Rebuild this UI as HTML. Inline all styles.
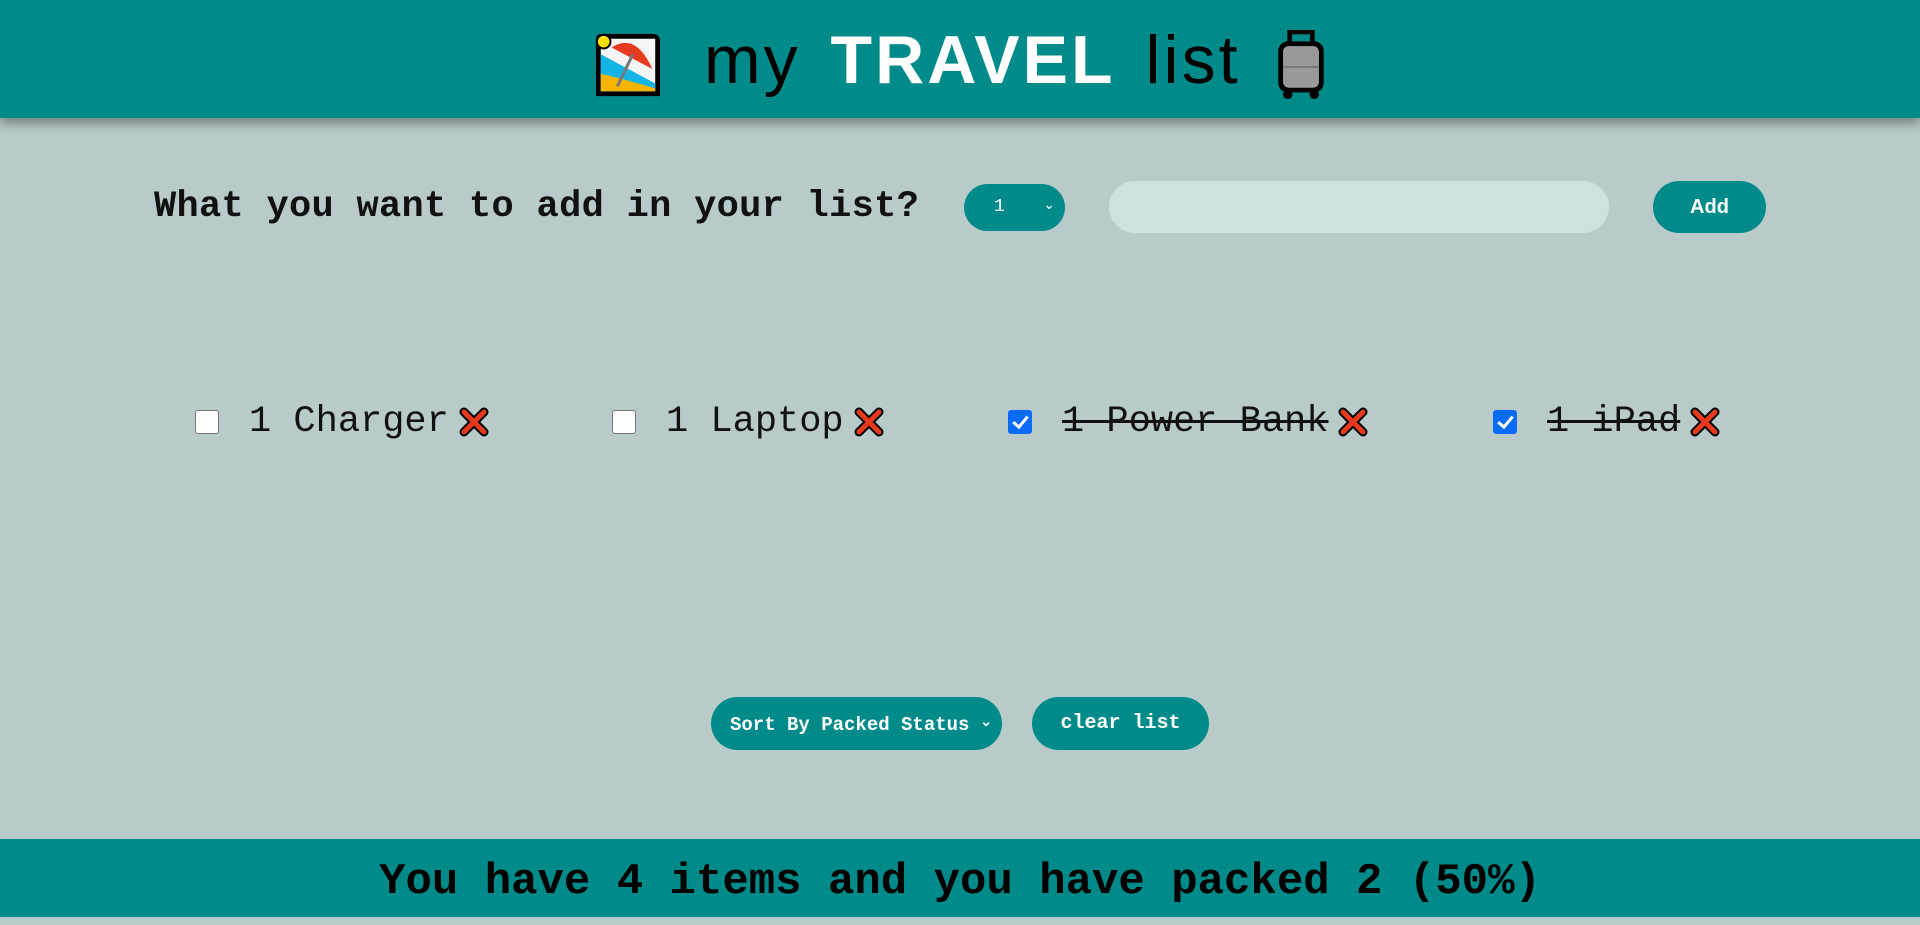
<!DOCTYPE html>
<html><head><meta charset="utf-8"><style>
*{margin:0;padding:0;box-sizing:border-box}
body{width:1920px;height:917px;background:#b8cbca;font-family:"Liberation Mono",monospace;position:relative;overflow:hidden}
.hdr{position:absolute;left:0;top:0;width:1920px;height:118px;background:#008b8a;box-shadow:0 6px 10px rgba(0,0,0,.35)}
.title{position:absolute;left:704px;top:26px;font-family:"Liberation Sans",sans-serif;font-size:68px;line-height:1;color:#000;white-space:nowrap;letter-spacing:3px;word-spacing:8px}
.title span{color:#fff;font-weight:bold}
.sel{position:absolute;left:964px;top:184px;width:101px;height:47px;border-radius:24px;background:#008b8a;color:#fff;font-size:18px;padding:13px 0 0 30px}
.sel i,.sort i{position:absolute;right:10px;top:13px;font-style:normal;font-size:14px}
.q{position:absolute;left:154px;top:186px;font-size:37px;font-weight:bold;color:#111;letter-spacing:0.3px}
.inp{position:absolute;left:1109px;top:181px;width:500px;height:52px;border-radius:26px;background:#cfe0e0}
.add{position:absolute;left:1653px;top:181px;width:113px;height:52px;border-radius:26px;background:#008b8a;color:#fff;font-weight:bold;font-size:20px;text-align:center;line-height:52px;font-family:"Liberation Sans",sans-serif}
.item{position:absolute;top:400px;height:44px;display:flex;align-items:center;font-size:37px;color:#111;white-space:nowrap}
.cb{width:24px;height:24px;border:1px solid #777;border-radius:3px;background:#fff;margin-right:30px}
.cb.on{background:#0a6cf5;border-color:#0a6cf5;position:relative}
.cb.on:after{content:"";position:absolute;left:7px;top:2px;width:6px;height:12px;border:solid #fff;border-width:0 3px 3px 0;transform:rotate(40deg)}
.x{margin-left:10px;width:30px;height:30px}
.s{text-decoration:line-through;text-decoration-thickness:3px}
.sort{position:absolute;left:711px;top:697px;width:291px;height:53px;border-radius:27px;background:#008b8a;color:#fff;font-weight:bold;font-size:19px;padding:17px 0 0 19px}
.clr{position:absolute;left:1032px;top:697px;width:177px;height:53px;border-radius:27px;background:#008b8a;color:#fff;font-weight:bold;font-size:20px;text-align:center;line-height:53px}
.ftr{position:absolute;left:0;top:839px;width:1920px;height:78px;background:#008b8a;text-align:center;font-size:44px;font-weight:bold;line-height:86px;color:#000}
</style></head><body>
<div class="hdr">
<svg style="position:absolute;left:591px;top:30px" width="74" height="70" viewBox="0 0 74 72">
<path d="M4 10 Q4 4 10 4 H62 Q70 4 70 12 V68 H4Z" fill="#000"/>
<rect x="9" y="9" width="56" height="54" fill="#f5f5f5"/>
<path d="M9 25 L65 55 V63 H9Z" fill="#12b4e8"/>
<path d="M9 45 L30 50 L65 60 V63 H9Z" fill="#f7b500"/>
<circle cx="12" cy="12" r="7" fill="#ffe000" stroke="#000" stroke-width="2"/>
<path d="M20 18 Q45 2 62 40 Z" fill="#e63b1e"/>
<line x1="42" y1="25" x2="26" y2="58" stroke="#777" stroke-width="3"/>
</svg>
<div class="title">my <span>TRAVEL</span> list</div>
<svg style="position:absolute;left:1273px;top:30px" width="56" height="70" viewBox="0 0 52 74">
<rect x="14" y="2" width="24" height="14" fill="none" stroke="#000" stroke-width="5"/>
<rect x="2" y="12" width="48" height="54" rx="10" fill="#000"/>
<rect x="7" y="17" width="38" height="44" rx="6" fill="#999"/>
<line x1="7" y1="39" x2="45" y2="39" stroke="#777" stroke-width="2"/>
<circle cx="12" cy="68" r="5" fill="#000"/><circle cx="40" cy="68" r="5" fill="#000"/>
</svg>
</div>
<div class="q">What you want to add in your list?</div>
<div class="sel">1<i>⌄</i></div>
<div class="inp"></div>
<div class="add">Add</div>

<div class="item" style="left:195px"><div class="cb"></div>1 Charger<svg class="x" viewBox="0 0 30 30"><path d="M5 5L25 25M25 5L5 25" stroke="#000" stroke-width="9" stroke-linecap="round"/><path d="M5 5L25 25M25 5L5 25" stroke="#e8391d" stroke-width="5" stroke-linecap="round"/></svg></div>
<div class="item" style="left:612px"><div class="cb"></div>1 Laptop<svg class="x" viewBox="0 0 30 30"><path d="M5 5L25 25M25 5L5 25" stroke="#000" stroke-width="9" stroke-linecap="round"/><path d="M5 5L25 25M25 5L5 25" stroke="#e8391d" stroke-width="5" stroke-linecap="round"/></svg></div>
<div class="item" style="left:1008px"><div class="cb on"></div><span class="s">1 Power Bank</span><svg class="x" viewBox="0 0 30 30"><path d="M5 5L25 25M25 5L5 25" stroke="#000" stroke-width="9" stroke-linecap="round"/><path d="M5 5L25 25M25 5L5 25" stroke="#e8391d" stroke-width="5" stroke-linecap="round"/></svg></div>
<div class="item" style="left:1493px"><div class="cb on"></div><span class="s">1 iPad</span><svg class="x" viewBox="0 0 30 30"><path d="M5 5L25 25M25 5L5 25" stroke="#000" stroke-width="9" stroke-linecap="round"/><path d="M5 5L25 25M25 5L5 25" stroke="#e8391d" stroke-width="5" stroke-linecap="round"/></svg></div>

<div class="sort">Sort By Packed Status<i style="top:17px">⌄</i></div>
<div class="clr">clear list</div>
<div class="ftr">You have 4 items and you have packed 2 (50%)</div>
</body></html>
